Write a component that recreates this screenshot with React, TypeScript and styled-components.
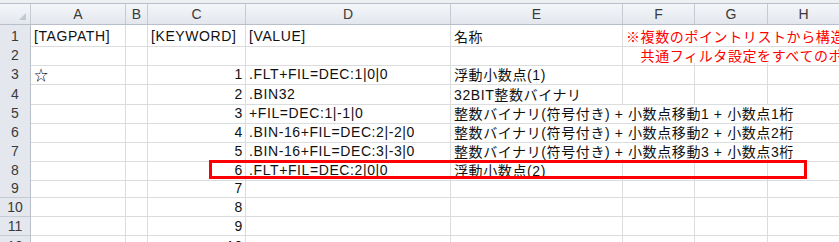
import React from "react"
import styled, { createGlobalStyle } from "styled-components"

const GlobalStyle = createGlobalStyle`
  html, body {
    margin: 0;
    padding: 0;
    background: #ffffff;
  }
  body {
    font-family: "Liberation Sans", "Noto Sans CJK JP", sans-serif;
  }
`

// 列幅(行見出し, A〜H)
const COLS = "31px 95px 22px 98px 205px 172px 72px 73px 72px"
const ROW_H = 19.2
const LETTERS = ["A", "B", "C", "D", "E", "F", "G", "H"]

type CellData = { text: string; right?: boolean; red?: boolean }
type RowData = { cells: Record<string, CellData>; open?: string[] }

const rows: RowData[] = [
  {
    cells: {
      A: { text: "[TAGPATH]" },
      C: { text: "[KEYWORD]" },
      D: { text: "[VALUE]" },
      E: { text: "名称" },
      F: { text: "※複数のポイントリストから構造化タグを作成する場合", red: true },
    },
    open: ["F", "G", "H"],
  },
  {
    cells: {
      F: { text: "\u3000共通フィルタ設定をすべてのポイントに適用", red: true },
    },
    open: ["F", "G", "H"],
  },
  {
    cells: {
      A: { text: "☆" },
      C: { text: "1", right: true },
      D: { text: ".FLT+FIL=DEC:1|0|0" },
      E: { text: "浮動小数点(1)" },
    },
  },
  {
    cells: {
      C: { text: "2", right: true },
      D: { text: ".BIN32" },
      E: { text: "32BIT整数バイナリ" },
    },
  },
  {
    cells: {
      C: { text: "3", right: true },
      D: { text: "+FIL=DEC:1|-1|0" },
      E: { text: "整数バイナリ(符号付き) + 小数点移動1 + 小数点1桁" },
    },
    open: ["E", "F", "G"],
  },
  {
    cells: {
      C: { text: "4", right: true },
      D: { text: ".BIN-16+FIL=DEC:2|-2|0" },
      E: { text: "整数バイナリ(符号付き) + 小数点移動2 + 小数点2桁" },
    },
    open: ["E", "F", "G"],
  },
  {
    cells: {
      C: { text: "5", right: true },
      D: { text: ".BIN-16+FIL=DEC:3|-3|0" },
      E: { text: "整数バイナリ(符号付き) + 小数点移動3 + 小数点3桁" },
    },
    open: ["E", "F", "G"],
  },
  {
    cells: {
      C: { text: "6", right: true },
      D: { text: ".FLT+FIL=DEC:2|0|0" },
      E: { text: "浮動小数点(2)" },
    },
  },
  { cells: { C: { text: "7", right: true } } },
  { cells: { C: { text: "8", right: true } } },
  { cells: { C: { text: "9", right: true } } },
  { cells: { C: { text: "10", right: true } } },
]

const Sheet = styled.div`
  position: relative;
  width: 839px;
  height: 242px;
  overflow: hidden;
  background: #ffffff;
`

const TopStrip = styled.div`
  height: 3px;
  background: #eef0f3;
  border-bottom: 1px solid #b9bfc8;
`

const HeaderRow = styled.div`
  display: grid;
  grid-template-columns: ${COLS};
  height: 21px;
  box-sizing: border-box;
  border-bottom: 1px solid #b9bfc8;
  background: linear-gradient(#f4f6f9, #e3e7ed);
`

const Corner = styled.div`
  display: flex;
  align-items: flex-end;
  justify-content: flex-end;
  padding: 0 4px 4px 0;
  border-right: 1px solid #c6cbd3;
`

const ColHead = styled.div`
  display: flex;
  align-items: center;
  justify-content: center;
  border-right: 1px solid #c6cbd3;
  font-size: 14px;
  color: #3a3a3a;
`

const Row = styled.div`
  display: grid;
  grid-template-columns: ${COLS};
  height: ${ROW_H}px;
`

const RowHead = styled.div`
  display: flex;
  align-items: center;
  justify-content: center;
  box-sizing: border-box;
  padding-top: 1px;
  background: #e4e8ee;
  border-right: 1px solid #b9bfc8;
  border-bottom: 1px solid #c6cbd3;
  font-size: 14px;
  color: #3a3a3a;
`

const Cell = styled.div<{ $right?: boolean; $open?: boolean; $red?: boolean }>`
  display: flex;
  align-items: center;
  justify-content: ${(p) => (p.$right ? "flex-end" : "flex-start")};
  box-sizing: border-box;
  min-width: 0;
  padding: 1px ${(p) => (p.$right ? "2px" : "3px")} 0 3px;
  border-bottom: 1px solid #dadcdd;
  border-right: 1px solid ${(p) => (p.$open ? "transparent" : "#dadcdd")};
  white-space: nowrap;
  font-size: 14px;
  letter-spacing: 0.6px;
  color: ${(p) => (p.$red ? "#ff0000" : "#111111")};
`

const Highlight = styled.div`
  position: absolute;
  left: 209px;
  top: 160px;
  width: 598px;
  height: 19px;
  box-sizing: border-box;
  border: 3px solid #ff0000;
  pointer-events: none;
`

const App: React.FC = () => {
  return (
    <Sheet>
      <GlobalStyle />
      <TopStrip />
      <HeaderRow>
        <Corner>
          <svg width="7" height="7" viewBox="0 0 7 7">
            <polygon points="7,0 7,7 0,7" fill="#c3c8cf" />
          </svg>
        </Corner>
        {LETTERS.map((l) => (
          <ColHead key={l}>{l}</ColHead>
        ))}
      </HeaderRow>
      {rows.map((row, i) => (
        <Row key={i}>
          <RowHead>{i + 1}</RowHead>
          {LETTERS.map((l) => {
            const c = row.cells[l]
            return (
              <Cell key={l} $right={c?.right} $red={c?.red} $open={row.open?.includes(l)}>
                {c?.text}
              </Cell>
            )
          })}
        </Row>
      ))}
      <Highlight />
    </Sheet>
  )
}

export default App
